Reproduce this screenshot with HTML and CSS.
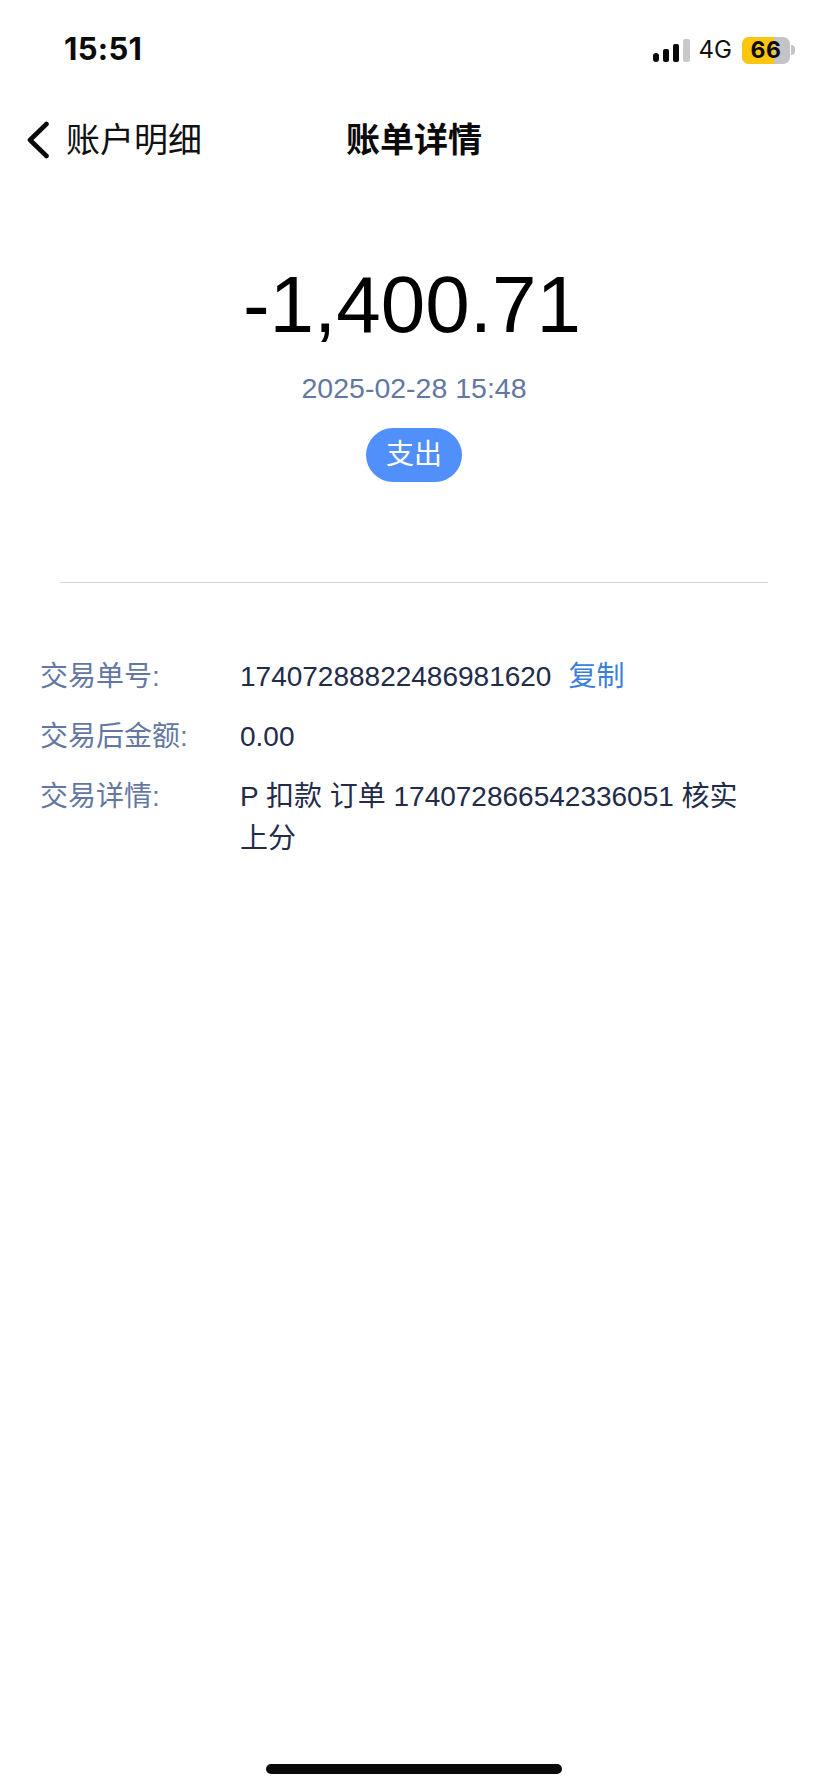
FILE: index.html
```html
<!DOCTYPE html>
<html lang="zh-CN">
<head>
<meta charset="utf-8">
<title>账单详情</title>
<link rel="stylesheet" href="styles.css">
</head>
<body>
<div class="screen">
  <div class="status">
    <span class="time">15:51</span>
    <div class="status-right">
      <div class="signal"><i class="b1"></i><i class="b2"></i><i class="b3"></i><i class="b4"></i></div>
      <span class="net">4G</span>
      <div class="battery"><div class="cell"><span class="level"></span><span class="pct">66</span></div><span class="nub"></span></div>
    </div>
  </div>
  <div class="nav">
    <div class="back">
      <svg class="chev" width="24" height="38" viewBox="0 0 24 38"><path d="M20.5 3 L4 19 L20.5 35" fill="none" stroke="#0a0a0a" stroke-width="4.6" stroke-linecap="round" stroke-linejoin="round"/></svg>
      <span>账户明细</span>
    </div>
    <h1 class="title">账单详情</h1>
  </div>
  <div class="summary">
    <div class="amount">-1,400.71</div>
    <div class="date">2025-02-28 15:48</div>
    <div class="badge">支出</div>
  </div>
  <div class="divider"></div>
  <div class="details">
    <div class="row"><div class="label">交易单号:</div><div class="value">17407288822486981620<a class="copy">复制</a></div></div>
    <div class="row"><div class="label">交易后金额:</div><div class="value">0.00</div></div>
    <div class="row"><div class="label">交易详情:</div><div class="value">P 扣款 订单 174072866542336051 核实上分</div></div>
  </div>
  <div class="spacer"></div>
  <div class="home"></div>
</div>
</body>
</html>
```
FILE: styles.css
```css
* { box-sizing: border-box; }
html, body { margin: 0; padding: 0; background: #fff; }
body { font-family: "Liberation Sans", "Noto Sans CJK SC", sans-serif; }
.screen { width: 828px; height: 1792px; display: flex; flex-direction: column; overflow: hidden; }

.status { height: 100px; padding: 30px 33px 0 64px; display: flex; justify-content: space-between; align-items: flex-start; flex: none; }
.time { font-family: Inter, sans-serif; font-weight: 700; font-size: 31px; line-height: 38px; color: #0a0a0a; letter-spacing: 0.3px; }
.status-right { display: flex; align-items: center; gap: 9px; height: 40px; }
.signal { display: flex; align-items: flex-end; gap: 4px; height: 23px; }
.signal i { display: block; width: 6px; background: #0a0a0a; border-radius: 2px; }
.signal .b1 { height: 9px; border-radius: 3px; }
.signal .b2 { height: 13px; }
.signal .b3 { height: 18px; }
.signal .b4 { height: 23px; width: 7px; background: #c9c9cb; }
.net { font-family: Inter, "Liberation Sans", sans-serif; font-size: 24px; color: #111; line-height: 30px; }
.battery { display: flex; align-items: center; gap: 1px; margin-left: 1px; }
.cell { position: relative; width: 48px; height: 27px; border-radius: 7px; background: #c3c4c7; overflow: hidden; display: flex; align-items: center; justify-content: center; }
.level { position: absolute; left: 0; top: 0; bottom: 0; width: 32px; background: #fbc60d; }
.pct { position: relative; font-family: Inter, sans-serif; font-weight: 700; font-size: 23px; line-height: 27px; color: #0a0a0a; letter-spacing: 0.5px; }
.nub { width: 4px; height: 10px; background: #c3c4c7; border-radius: 0 4px 4px 0; }

.nav { position: relative; height: 80px; flex: none; display: flex; align-items: center; justify-content: center; }
.back { position: absolute; left: 26px; top: 20px; display: flex; align-items: center; gap: 16px; font-size: 34px; line-height: 40px; color: #111; }
.title { margin: 0; font-size: 34px; font-weight: 700; color: #0a0a0a; line-height: 40px; }

.summary { padding-top: 79px; display: flex; flex-direction: column; align-items: center; flex: none; }
.amount { font-size: 80px; line-height: 92px; color: #000; padding-right: 4px; }
.date { margin-top: 20px; font-size: 28.5px; line-height: 34px; color: #6477a3; }
.badge { margin-top: 23px; width: 96px; height: 54px; border-radius: 27px; background: #518ffa; color: #fff; font-size: 28px; line-height: 54px; text-align: center; }

.divider { height: 1px; margin: 100px 60px 0; background: #d2d5da; flex: none; }

.details { padding: 73px 40px 0; display: flex; flex-direction: column; gap: 18px; flex: none; }
.row { display: flex; font-size: 28px; line-height: 42px; }
.label { width: 200px; flex: none; color: #6477a3; }
.value { flex: 1; padding-right: 34px; color: #222b4a; }
.copy { margin-left: 17px; color: #3a80d8; }

.spacer { flex: 1; }
.home { width: 296px; height: 10px; margin: 0 auto 18px; border-radius: 5px; background: #0a0a0a; flex: none; }
```
